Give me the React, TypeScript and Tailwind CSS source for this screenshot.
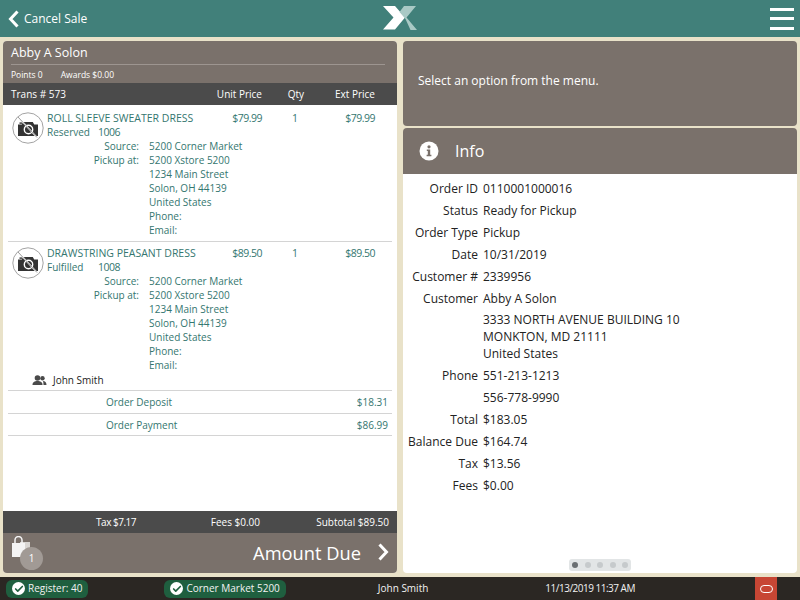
import { Check } from 'lucide-react';

const addressLines = ['5200 Xstore 5200', '1234 Main Street', 'Solon, OH 44139', 'United States', 'Phone:', 'Email:'];

const infoRows: { label: string; value: string[] }[] = [
  { label: 'Order ID', value: ['0110001000016'] },
  { label: 'Status', value: ['Ready for Pickup'] },
  { label: 'Order Type', value: ['Pickup'] },
  { label: 'Date', value: ['10/31/2019'] },
  { label: 'Customer #', value: ['2339956'] },
  { label: 'Customer', value: ['Abby A Solon'] },
  { label: '', value: ['3333 NORTH AVENUE BUILDING 10', 'MONKTON, MD 21111', 'United States'] },
  { label: 'Phone', value: ['551-213-1213'] },
  { label: '', value: ['556-778-9990'] },
  { label: 'Total', value: ['$183.05'] },
  { label: 'Balance Due', value: ['$164.74'] },
  { label: 'Tax', value: ['$13.56'] },
  { label: 'Fees', value: ['$0.00'] },
];

function NoPhotoIcon() {
  return (
    <svg width="32" height="32" viewBox="0 0 32 32" className="shrink-0">
      <circle cx="16" cy="16" r="15.200" fill="#fff" stroke="#a3a3a3" strokeWidth="1" />
      <path d="M6 12.500h3.800l1.400-2.500h9.600l1.400 2.500H26V24H6z" fill="#333" />
      <rect x="7.500" y="10.400" width="3" height="1.400" fill="#333" />
      <circle cx="16.500" cy="17.500" r="4.200" fill="#333" stroke="#fff" strokeWidth="1.400" />
      <path d="M6.500 5.500 25.500 26" stroke="#fff" strokeWidth="1.400" />
      <path d="M6 5 25 25.500" stroke="#8f8f8f" strokeWidth="0.900" />
    </svg>
  );
}

function OrderItem({ name, price, status, code }: { name: string; price: string; status: string; code: string }) {
  const numCls = 'text-[10.500px] tracking-[-0.5px]';
  return (
    <div className="flex pl-[9px] text-[10px] leading-[14px] text-[#34766f]">
      <div className="pt-[1px]">
        <NoPhotoIcon />
      </div>
      <div className="ml-[3px] w-[342px]">
        <div className="flex">
          <div className="w-[168px] whitespace-nowrap text-[10.500px]">{name}</div>
          <div className={`w-[47px] text-right ${numCls}`}>{price}</div>
          <div className={`w-[53px] pl-[30px] ${numCls}`}>1</div>
          <div className={`w-[60px] text-right ${numCls}`}>{price}</div>
        </div>
        <div className="flex">
          <div className="w-[51px]">{status}</div>
          <div className={numCls}>{code}</div>
        </div>
        <div className="flex">
          <div className="w-[92px] text-right">Source:</div>
          <div className="ml-[10px]">5200 Corner Market</div>
        </div>
        <div className="flex">
          <div className="w-[92px] text-right">Pickup at:</div>
          <div className="ml-[10px]">
            {addressLines.map((line) => (
              <div key={line}>{line}</div>
            ))}
          </div>
        </div>
      </div>
    </div>
  );
}

function StatusPill({ text }: { text: string }) {
  return (
    <div className="flex h-[18px] items-center gap-[3px] rounded-[6px] bg-[#1f5f3f] px-[6px] text-[10px] text-[#f2f2f2]">
      <span className="flex h-[13px] w-[13px] items-center justify-center rounded-full bg-white">
        <Check size={10} strokeWidth={4} color="#1f5f3f" />
      </span>
      {text}
    </div>
  );
}

export default function App() {
  return (
    <div
      className="flex h-[600px] w-[800px] flex-col overflow-hidden bg-[#e9e2c9]"
      style={{ fontFamily: '"Open Sans", "Noto Sans", sans-serif' }}
    >
      {/* top bar */}
      <div className="relative flex h-[37px] shrink-0 items-center justify-between bg-[#41807a] pl-[8px] pr-[6px] text-white">
        <div className="flex items-center gap-[5px] text-[12px]">
          <svg width="11" height="18" viewBox="0 0 11 18" fill="none" stroke="#fff" strokeWidth="3">
            <path d="M9.500 1.500 2.500 9l7 7.500" />
          </svg>
          <span>Cancel Sale</span>
        </div>
        <svg width="34" height="26" viewBox="0 0 34 26" className="absolute left-[383px] top-[5px]">
          <path d="M0 1h12l10 11.500-10 12H0l10.500-12z" fill="#fff" />
          <path d="M33 1H21l-4.500 6 6 7 5 11H34l-10.500-12.500z" fill="#a9c9c5" />
        </svg>
        <div className="flex w-[24px] flex-col gap-[6.500px]">
          <div className="h-[3px] bg-white" />
          <div className="h-[3px] bg-white" />
          <div className="h-[3px] bg-white" />
        </div>
      </div>

      <div className="flex min-h-0 flex-1 gap-[6px] px-[3px] pb-[4px] pt-[4px]">
        {/* left panel */}
        <div className="flex w-[394px] flex-col overflow-hidden rounded-[4px] bg-white">
          <div className="h-[42px] shrink-0 bg-[#7a716b] px-[8px] pt-[3px] text-white">
            <div className="text-[12.500px] leading-[18px]">Abby A Solon</div>
            <div className="mt-[2px] h-px w-[374px] bg-[#9d9590]" />
            <div className="mt-[3px] flex gap-[18px] text-[8.500px] leading-[14px]">
              <span>Points 0</span>
              <span>Awards $0.00</span>
            </div>
          </div>
          <div className="flex h-[22px] shrink-0 items-center bg-[#4b4b4b] pl-[8px] text-[10px] text-white">
            <div className="w-[199px]">Trans # 573</div>
            <div className="w-[52px] text-right">Unit Price</div>
            <div className="w-[42px] text-right">Qty</div>
            <div className="w-[71px] text-right">Ext Price</div>
          </div>
          <div className="min-h-0 flex-1 pt-[6px]">
            <OrderItem name="ROLL SLEEVE SWEATER DRESS" price="$79.99" status="Reserved" code="1006" />
            <div className="mx-[5px] mb-[4px] mt-[4px] h-px bg-[#d4d4d4]" />
            <OrderItem name="DRAWSTRING PEASANT DRESS" price="$89.50" status="Fulfilled" code="1008" />
            <div className="mt-[1px] flex h-[14px] items-center pl-[29px] text-[10px] text-[#222]">
              <svg width="15" height="10" viewBox="0 0 14 10" fill="#4a4a4a">
                <circle cx="5" cy="3" r="2.800" />
                <path d="M0 10c0-3 2-4 5-4s5 1 5 4z" />
                <circle cx="10" cy="3.200" r="2.200" />
                <path d="M10.500 6c2 .2 3.500 1.200 3.500 4h-3c0-1.500-.2-3-.5-4z" />
              </svg>
              <span className="ml-[6px]">John Smith</span>
            </div>
            <div className="mx-[5px] mt-[3px] h-px bg-[#d4d4d4]" />
            <div className="flex h-[22px] items-center justify-between pl-[103px] pr-[9px] text-[10px] text-[#34766f]">
              <span>Order Deposit</span>
              <span>$18.31</span>
            </div>
            <div className="mx-[5px] h-px bg-[#d4d4d4]" />
            <div className="flex h-[21px] items-center justify-between pl-[103px] pr-[9px] pt-[1px] text-[10px] text-[#34766f]">
              <span>Order Payment</span>
              <span>$86.99</span>
            </div>
            <div className="mx-[5px] h-px bg-[#d4d4d4]" />
          </div>
          <div className="flex h-[22px] shrink-0 items-center bg-[#4b4b4b] text-[10px] text-white">
            <div className="w-[133px] text-right tracking-[-0.5px]">Tax $7.17</div>
            <div className="w-[124px] text-right">Fees $0.00</div>
            <div className="flex-1 pr-[8px] text-right">Subtotal $89.50</div>
          </div>
          <div className="relative flex h-[40px] shrink-0 items-center justify-end bg-[#7a716b] pr-[8px] text-white">
            <svg width="20" height="22" viewBox="0 0 20 22" className="absolute left-[8px] top-[3px]">
              <path d="M9 6h10v9H9z" fill="#d9d6d3" />
              <path d="M1 7h13v14H1z" fill="#f4f4f4" />
              <path d="M4 8V4a3.500 3.500 0 0 1 7 0v4" fill="none" stroke="#f4f4f4" strokeWidth="1.500" />
            </svg>
            <div className="absolute left-[17px] top-[14px] flex h-[23px] w-[23px] items-center justify-center rounded-full bg-[#a19a95] text-[10px] text-white">
              1
            </div>
            <span className="text-[18.300px]">Amount Due</span>
            <svg width="11" height="18" viewBox="0 0 11 18" fill="none" stroke="#fff" strokeWidth="3" className="mb-[2px] ml-[17px]">
              <path d="M1.500 1.500 8.500 9l-7 7.500" />
            </svg>
          </div>
        </div>

        {/* right panel */}
        <div className="flex w-[394px] flex-col">
          <div className="flex h-[85px] shrink-0 items-center rounded-[4px] bg-[#7a716b] pb-[5px] pl-[15px] text-[12px] text-white">
            Select an option from the menu.
          </div>
          <div className="mt-[2px] flex h-[46px] shrink-0 items-center rounded-t-[4px] bg-[#7a716b] pl-[16px] text-white">
            <svg width="20" height="20" viewBox="0 0 20 20">
              <circle cx="10" cy="10" r="9.500" fill="#fff" />
              <circle cx="10" cy="5.800" r="1.600" fill="#7a716b" />
              <path d="M7.800 8.500h3.400v5.200h1.200v1.500H7.600v-1.500h1.200v-3.700h-1z" fill="#7a716b" />
            </svg>
            <span className="ml-[16px] text-[16px]">Info</span>
          </div>
          <div className="relative min-h-0 flex-1 rounded-b-[4px] bg-white pt-[3px] text-[12px] text-[#222]">
            {infoRows.map((row, i) => (
              <div key={i} className={i === 6 ? '-mt-[0.5px] flex py-[2.500px] leading-[17px]' : 'flex py-[2.500px] leading-[17px]'}>
                <div className="w-[75px] shrink-0 whitespace-nowrap text-right">{row.label}</div>
                <div className="ml-[5px]">
                  {row.value.map((line) => (
                    <div key={line}>{line}</div>
                  ))}
                </div>
              </div>
            ))}
            <div className="absolute bottom-[2px] left-[166px] flex h-[12px] w-[62px] items-center justify-center gap-[6.500px] rounded-[3px] bg-[#e2e5e6]">
              <span className="h-[6px] w-[6px] rounded-full bg-[#6a6f72]" />
              <span className="h-[6px] w-[6px] rounded-full bg-[#c6cacc]" />
              <span className="h-[6px] w-[6px] rounded-full bg-[#c6cacc]" />
              <span className="h-[6px] w-[6px] rounded-full bg-[#c6cacc]" />
              <span className="h-[6px] w-[6px] rounded-full bg-[#c6cacc]" />
            </div>
          </div>
        </div>
      </div>

      {/* footer */}
      <div className="relative flex h-[23px] shrink-0 items-center bg-[#2b2723] pl-[6px] text-[10px] text-[#f2f2f2]">
        <StatusPill text="Register: 40" />
        <div className="ml-[76px]">
          <StatusPill text="Corner Market 5200" />
        </div>
        <span className="ml-[92px]">John Smith</span>
        <span className="ml-[117px] tracking-[-0.5px]">11/13/2019 11:37 AM</span>
        <div className="absolute left-[755px] top-0 flex h-[23px] w-[22px] items-center justify-center bg-[#c74634]">
          <span className="h-[8px] w-[13px] rounded-[4px] border-[1.500px] border-white" />
        </div>
      </div>
    </div>
  );
}
